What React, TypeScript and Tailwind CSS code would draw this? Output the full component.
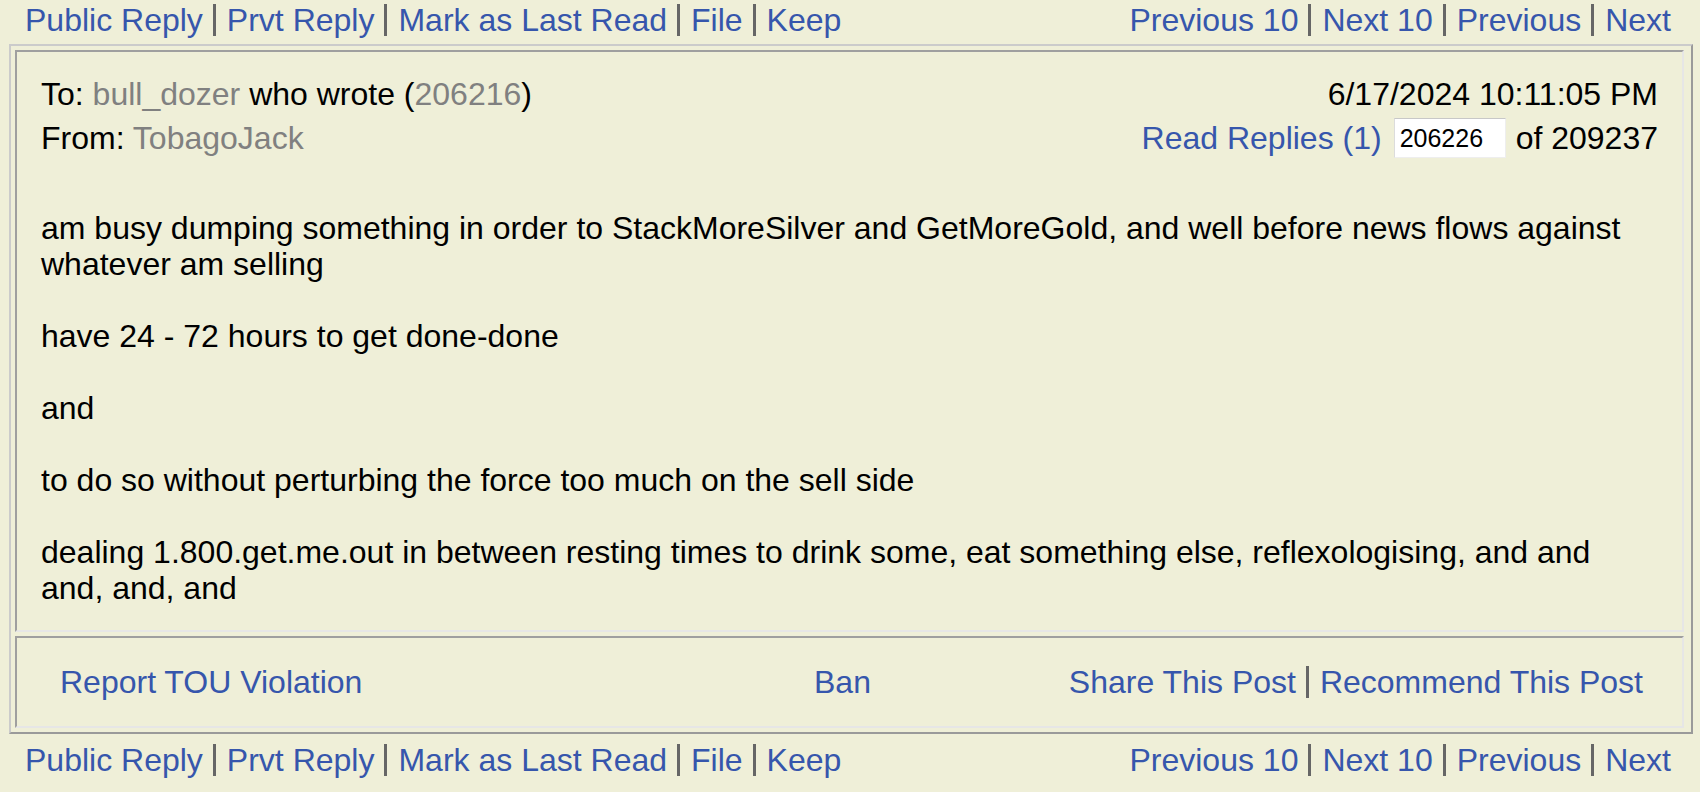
import React from 'react';

const linkCls = 'text-[#3656ac] hover:underline cursor-pointer whitespace-nowrap';

function Sep() {
  return <span className="inline-block w-[3px] h-[32px] bg-[#666666] ml-[10px] mr-[11px] shrink-0" />;
}

function NavBar() {
  return (
    <div className="h-[39px] flex items-center justify-between pl-[25px] pr-[29px]">
      <div className="flex items-center">
        <a className={linkCls}>Public Reply</a>
        <Sep />
        <a className={linkCls}>Prvt Reply</a>
        <Sep />
        <a className={linkCls}>Mark as Last Read</a>
        <Sep />
        <a className={linkCls}>File</a>
        <Sep />
        <a className={linkCls}>Keep</a>
      </div>
      <div className="flex items-center">
        <a className={linkCls}>Previous 10</a>
        <Sep />
        <a className={linkCls}>Next 10</a>
        <Sep />
        <a className={linkCls}>Previous</a>
        <Sep />
        <a className={linkCls}>Next</a>
      </div>
    </div>
  );
}

const paragraphs = [
  'am busy dumping something in order to StackMoreSilver and GetMoreGold, and well before news flows against whatever am selling',
  'have 24 - 72 hours to get done-done',
  'and',
  'to do so without perturbing the force too much on the sell side',
  'dealing 1.800.get.me.out in between resting times to drink some, eat something else, reflexologising, and and and, and, and',
];

export default function App() {
  return (
    <div className="min-h-screen w-[1700px] bg-[#efefd8] text-black font-['Liberation_Sans',Arial,sans-serif] text-[32px] leading-[36px]">
      <NavBar />

      <div className="ml-[9px] mt-[5px] w-[1684px] border-2 border-t-[#cbcbcb] border-l-[#cbcbcb] border-r-[#9a9a9a] border-b-[#9a9a9a] pt-[4px] pl-[4px] pr-[7px] pb-[4px] flex flex-col gap-[4px]">
        {/* message cell */}
        <div className="border-2 border-t-[#9f9f9f] border-l-[#9f9f9f] border-r-[#e6e6e6] border-b-[#e6e6e6] px-[24px] py-[24px]">
          <div className="flex flex-col gap-[4px]">
            <div className="h-[36px] flex items-center justify-between">
              <div>
                To: <span className="text-[#808080]">bull_dozer</span> who wrote (
                <span className="text-[#808080]">206216</span>)
              </div>
              <div>6/17/2024 10:11:05 PM</div>
            </div>
            <div className="h-[44px] flex items-center justify-between">
              <div>
                From: <span className="text-[#808080]">TobagoJack</span>
              </div>
              <div className="flex items-center">
                <a className={linkCls}>Read Replies (1)</a>
                <input
                  defaultValue="206226"
                  className="ml-[12px] mr-[10px] w-[112px] h-[40px] bg-white border border-t-[#c8c8c8] border-l-[#dcdcdc] border-r-[#eeeeee] border-b-[#eeeeee] px-[5px] text-[25px] text-black outline-none font-['Liberation_Sans',Arial,sans-serif]"
                />
                <span>of 209237</span>
              </div>
            </div>
          </div>

          <div className="mt-[50px]">
            {paragraphs.map((p, i) => (
              <p key={i} className={i < paragraphs.length - 1 ? 'mb-[36px]' : ''}>
                {p}
              </p>
            ))}
          </div>
        </div>

        {/* actions cell */}
        <div className="h-[92px] border-2 border-t-[#9f9f9f] border-l-[#9f9f9f] border-r-[#e6e6e6] border-b-[#e6e6e6] flex items-center pl-[43px] pr-[39px]">
          <div className="w-[754px] shrink-0">
            <a className={linkCls}>Report TOU Violation</a>
          </div>
          <a className={linkCls}>Ban</a>
          <div className="ml-auto flex items-center">
            <a className={linkCls}>Share This Post</a>
            <Sep />
            <a className={linkCls}>Recommend This Post</a>
          </div>
        </div>
      </div>

      <div className="mt-[6px]">
        <NavBar />
      </div>
    </div>
  );
}
